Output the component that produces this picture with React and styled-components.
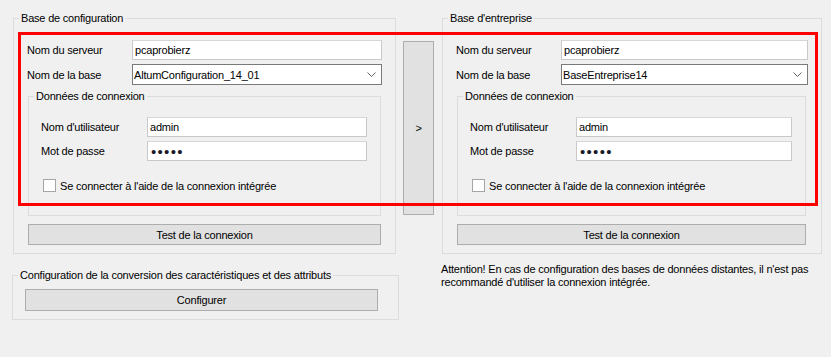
import React from 'react';
import styled, { createGlobalStyle } from 'styled-components';

const GlobalStyle = createGlobalStyle`
  html, body {
    margin: 0;
    padding: 0;
    background: #f0f0f0;
  }
  body {
    font-family: "Liberation Sans", Arial, sans-serif;
    font-size: 11px;
    letter-spacing: -0.2px;
    color: #000;
  }
`;

const Page = styled.div`
  position: relative;
  width: 831px;
  height: 357px;
  box-sizing: border-box;
  padding: 12px 0 0 12px;
  background: #f0f0f0;
  overflow: hidden;
`;

const TopRow = styled.div`
  display: flex;
  align-items: flex-start;
  margin-left: 1px;
`;

const BottomRow = styled.div`
  display: flex;
  align-items: flex-start;
  margin-top: 9px;
`;

const GroupBox = styled.fieldset`
  box-sizing: border-box;
  margin: ${(p) => p.$offset || 0}px 0 0 0;
  padding: 0;
  min-width: 0;
  width: ${(p) => p.$width}px;
  height: ${(p) => p.$height}px;
  border: 1px solid #dcdcdc;
`;

const Legend = styled.legend`
  margin-left: 5px;
  padding: 0 2px;
  line-height: 13px;
  font-size: 11px;
`;

const GroupBody = styled.div`
  display: flex;
  flex-direction: column;
  padding: ${(p) => p.$pad || '15px 13px 0 13px'};
`;

const FieldRow = styled.div`
  display: flex;
  align-items: center;
  height: ${(p) => (p.$combo ? 21 : 20)}px;
  margin-top: ${(p) => p.$gap || 0}px;
`;

const Label = styled.span`
  flex: 0 0 ${(p) => p.$width}px;
  white-space: nowrap;
`;

const TextBox = styled.div`
  flex: 1;
  box-sizing: border-box;
  height: 100%;
  display: flex;
  align-items: center;
  padding-left: 2px;
  background: #fff;
  border: 1px solid #c9c9c9;
  border-top-color: #d6d6d6;
  white-space: nowrap;
  overflow: hidden;
`;

const Dots = styled.span`
  font-size: 15px;
  letter-spacing: 1.3px;
  line-height: 1;
  color: #1a1a2a;
  margin-left: 1px;
`;

const ComboBox = styled(TextBox)`
  border: 1px solid #7a7a7a;
  padding-left: 1px;
  padding-right: 5px;
  justify-content: space-between;
`;

const InnerGroup = styled(GroupBox)`
  margin: 5px 2px 0 1px;
`;

const CheckRow = styled.label`
  display: flex;
  align-items: center;
  height: 17px;
  margin: 16px 0 0 2px;
  gap: 4px;
`;

const CheckBox = styled.span`
  width: 13px;
  height: 13px;
  box-sizing: border-box;
  border: 1px solid #a5a5a5;
  background: #fff;
`;

const Button = styled.div`
  box-sizing: border-box;
  display: flex;
  align-items: center;
  justify-content: center;
  height: ${(p) => p.$height || 21}px;
  width: ${(p) => (p.$width ? `${p.$width}px` : 'auto')};
  margin: ${(p) => p.$margin || '0'};
  background: #e1e1e1;
  border: 1px solid #adadad;
  cursor: default;
`;

const Notice = styled.p`
  margin: 0 0 0 42px;
  line-height: 13px;
  white-space: nowrap;
`;

const Highlight = styled.div`
  position: absolute;
  left: 18px;
  top: 32px;
  width: 800px;
  height: 174px;
  box-sizing: border-box;
  border: 3px solid #ff0000;
  pointer-events: none;
`;

const Chevron = () => (
  <svg width="9" height="5" viewBox="0 0 9 5">
    <polyline points="0.5,0.5 4.5,4.5 8.5,0.5" fill="none" stroke="#606060" strokeWidth="1" />
  </svg>
);

const ConnectionGroup = ({ title, width, database, innerWidth }) => (
  <GroupBox $width={width} $height={242}>
    <Legend>{title}</Legend>
    <GroupBody>
      <FieldRow>
        <Label $width={105}>Nom du serveur</Label>
        <TextBox>pcaprobierz</TextBox>
      </FieldRow>
      <FieldRow $combo $gap={4}>
        <Label $width={105}>Nom de la base</Label>
        <ComboBox>
          <span>{database}</span>
          <Chevron />
        </ComboBox>
      </FieldRow>
      <InnerGroup $width={innerWidth} $height={126}>
        <Legend>Données de connexion</Legend>
        <GroupBody $pad="14px 13px 0 12px">
          <FieldRow>
            <Label $width={106}>Nom d'utilisateur</Label>
            <TextBox>admin</TextBox>
          </FieldRow>
          <FieldRow $gap={4}>
            <Label $width={106}>Mot de passe</Label>
            <TextBox>
              <Dots>•••••</Dots>
            </TextBox>
          </FieldRow>
          <CheckRow>
            <CheckBox />
            <span>Se connecter à l'aide de la connexion intégrée</span>
          </CheckRow>
        </GroupBody>
      </InnerGroup>
      <Button $width={innerWidth} $margin="8px 0 0 1px">
        Test de la connexion
      </Button>
    </GroupBody>
  </GroupBox>
);

const App = () => (
  <>
    <GlobalStyle />
    <Page>
      <TopRow>
        <ConnectionGroup
          title="Base de configuration"
          width={383}
          database="AltumConfiguration_14_01"
          innerWidth={353}
        />
        <Button $width={31} $height={174} $margin="29px 8px 0 7px">
          &gt;
        </Button>
        <ConnectionGroup
          title="Base d'entreprise"
          width={380}
          database="BaseEntreprise14"
          innerWidth={349}
        />
      </TopRow>
      <BottomRow>
        <GroupBox $width={387} $height={51} $offset={6}>
          <Legend>Configuration de la conversion des caractéristiques et des attributs</Legend>
          <GroupBody $pad="7px 0 0 12px">
            <Button $width={353} $height={22}>
              Configurer
            </Button>
          </GroupBody>
        </GroupBox>
        <Notice>
          Attention! En cas de configuration des bases de données distantes, il n'est pas
          <br />
          recommandé d'utiliser la connexion intégrée.
        </Notice>
      </BottomRow>
      <Highlight />
    </Page>
  </>
);

export default App;
